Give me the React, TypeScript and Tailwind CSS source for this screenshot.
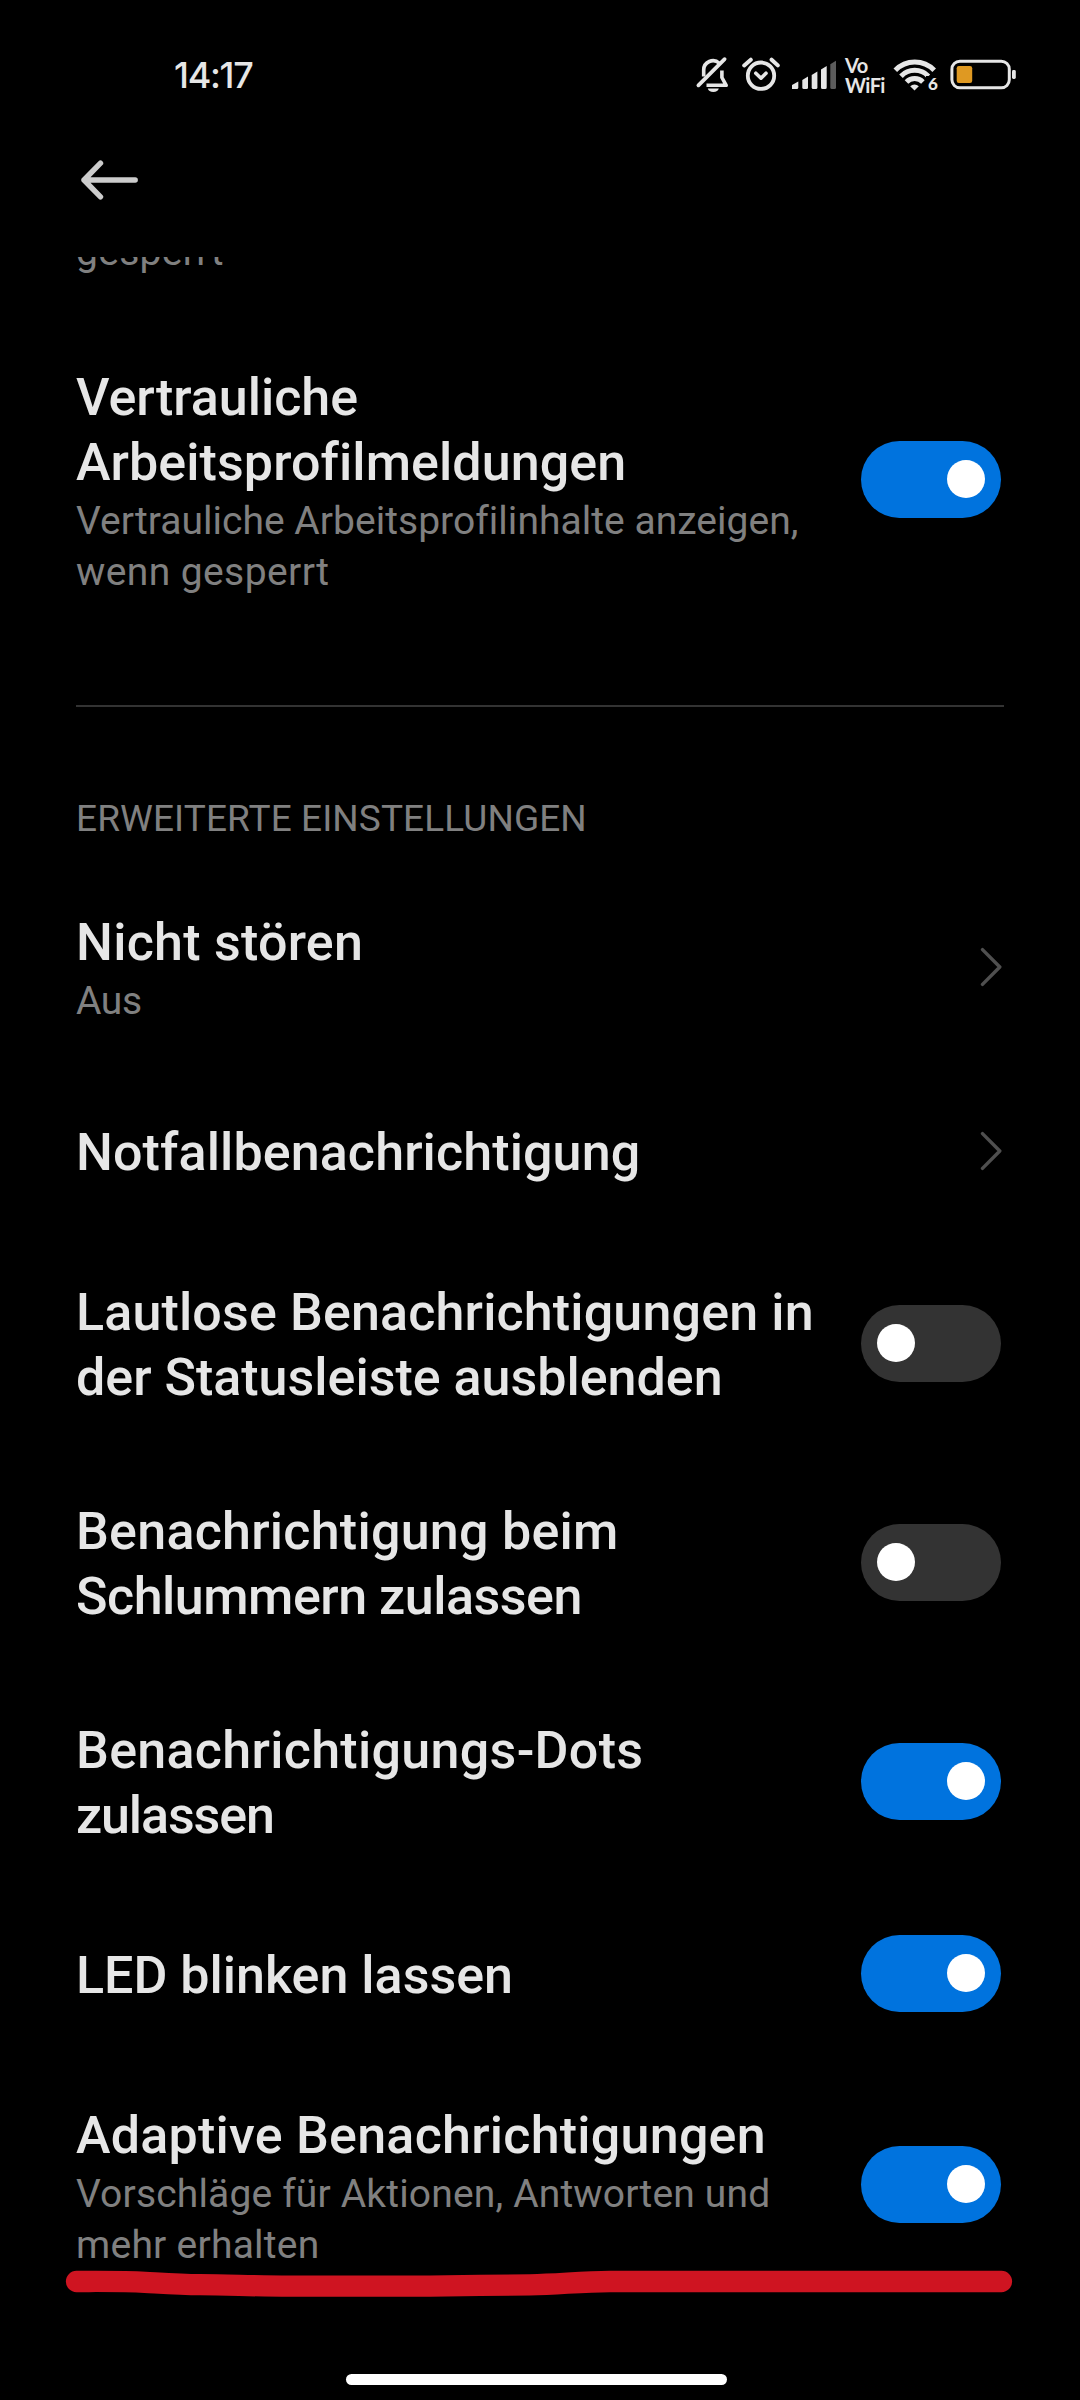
import { useState } from 'react';

type Line = { text: string; tracking: string };

type Setting = {
  title: Line[];
  summary?: Line[];
  kind: 'switch' | 'link';
  on?: boolean;
};

const PROFILE_SETTINGS: Setting[] = [
  {
    title: [
      { text: 'Vertrauliche', tracking: 'tracking-normal' },
      { text: 'Arbeitsprofilmeldungen', tracking: 'tracking-[0.08px]' },
    ],
    summary: [
      { text: 'Vertrauliche Arbeitsprofilinhalte anzeigen,', tracking: 'tracking-[0.03px]' },
      { text: 'wenn gesperrt', tracking: 'tracking-[0.4px]' },
    ],
    kind: 'switch',
    on: true,
  },
];

const ADVANCED_SETTINGS: Setting[] = [
  {
    title: [{ text: 'Nicht stören', tracking: 'tracking-[0.25px]' }],
    summary: [{ text: 'Aus', tracking: 'tracking-[-0.4px]' }],
    kind: 'link',
  },
  {
    title: [{ text: 'Notfallbenachrichtigung', tracking: 'tracking-[0.11px]' }],
    kind: 'link',
  },
  {
    title: [
      { text: 'Lautlose Benachrichtigungen in', tracking: 'tracking-[0.15px]' },
      { text: 'der Statusleiste ausblenden', tracking: 'tracking-normal' },
    ],
    kind: 'switch',
    on: false,
  },
  {
    title: [
      { text: 'Benachrichtigung beim', tracking: 'tracking-[0.25px]' },
      { text: 'Schlummern zulassen', tracking: 'tracking-[-0.48px]' },
    ],
    kind: 'switch',
    on: false,
  },
  {
    title: [
      { text: 'Benachrichtigungs-Dots', tracking: 'tracking-[0.3px]' },
      { text: 'zulassen', tracking: 'tracking-[-1.1px]' },
    ],
    kind: 'switch',
    on: true,
  },
  {
    title: [{ text: 'LED blinken lassen', tracking: 'tracking-normal' }],
    kind: 'switch',
    on: true,
  },
  {
    title: [{ text: 'Adaptive Benachrichtigungen', tracking: 'tracking-[0.24px]' }],
    summary: [
      { text: 'Vorschläge für Aktionen, Antworten und', tracking: 'tracking-[0.16px]' },
      { text: 'mehr erhalten', tracking: 'tracking-[0.25px]' },
    ],
    kind: 'switch',
    on: true,
  },
];

function BellOffIcon() {
  return (
    <svg width="34" height="38" viewBox="0 0 34 38" fill="none" stroke="#e6e6e6" strokeWidth="3.6">
      <path d="M8.7 21.5V15a9.3 9.3 0 0 1 15.6-6.8" />
      <path d="M26.9 15.5V22.5l4.3 7.8H11.5" strokeLinejoin="round" />
      <path d="M3.4 30.3L29.6 4.2" strokeWidth="3.8" strokeLinecap="round" />
      <path d="M12.8 33.6h11a5.6 4.2 0 0 1-11 0Z" fill="#e6e6e6" stroke="none" />
    </svg>
  );
}

function AlarmIcon() {
  return (
    <svg width="40" height="38" viewBox="0 0 40 38" fill="none" stroke="#e6e6e6" strokeWidth="3.6">
      <circle cx="20" cy="20.7" r="13.2" strokeWidth="3.8" />
      <path d="M14.8 18.2l5.2 5 5-5" strokeLinecap="round" strokeLinejoin="round" />
      <path d="M3.2 10.4L9.8 4.7M30.6 4.7l6.2 5.7" strokeLinecap="round" strokeWidth="4" />
    </svg>
  );
}

function SignalIcon() {
  return (
    <svg width="44" height="38" viewBox="0 0 44 38" fill="#e6e6e6">
      <path d="M0 30L6.3 26.5v6a1.5 1.5 0 0 1-1.5 1.5H0Z" />
      <path d="M10.3 25L16 21.5v11a1.5 1.5 0 0 1-1.5 1.5h-2.7a1.5 1.5 0 0 1-1.5-1.5Z" />
      <path d="M19.7 20l5.7-3.5v16a1.5 1.5 0 0 1-1.5 1.5h-2.7a1.5 1.5 0 0 1-1.5-1.5Z" />
      <path d="M29 14.5l5.7-3.5v21.5a1.5 1.5 0 0 1-1.5 1.5h-2.7a1.5 1.5 0 0 1-1.5-1.5Z" />
      <path d="M38.3 9.2l5.7-3.5v26.8a1.5 1.5 0 0 1-1.5 1.5h-2.7a1.5 1.5 0 0 1-1.5-1.5Z" fill="#5c5c5c" />
    </svg>
  );
}

function WifiIcon() {
  return (
    <svg width="44" height="38" viewBox="0 0 44 38" fill="none" stroke="#e6e6e6" strokeWidth="5">
      <path d="M2.3 15.2a27 27 0 0 1 38.9 0" />
      <path d="M8 21.2a19 19 0 0 1 27.4 0" />
      <path d="M13.5 27a11.5 11.5 0 0 1 16.4 0" />
      <path d="M17.2 31.3a6 6 0 0 1 8.6 0L21.5 35.6Z" fill="#e6e6e6" stroke="none" />
    </svg>
  );
}

function BatteryIcon() {
  return (
    <svg width="66" height="38" viewBox="0 0 66 38">
      <rect x="1.9" y="6.2" width="57.4" height="26.6" rx="8" fill="none" stroke="#e6e6e6" strokeWidth="3" />
      <rect x="6.7" y="11" width="15.5" height="17" rx="2.2" fill="#df9922" />
      <rect x="62" y="15" width="3.8" height="9" rx="1.4" fill="#e6e6e6" />
    </svg>
  );
}

function StatusBar() {
  return (
    <div className="flex h-[148px] items-center justify-between pr-[64px] pl-[174px] text-[#e6e6e6]">
      <span className="mt-[2px] font-['Inter',sans-serif] text-[36px] leading-none font-medium tracking-[-1.3px]">14:17</span>
      <div className="flex items-center">
        <BellOffIcon />
        <div className="ml-[12px]"><AlarmIcon /></div>
        <div className="ml-[11px]"><SignalIcon /></div>
        <div className="ml-[9px] flex w-[41px] flex-col pt-[1px] font-['Lato',sans-serif] text-[20px] leading-[20px] font-bold tracking-[-0.6px]">
          <span>Vo</span>
          <span>WiFi</span>
        </div>
        <div className="relative ml-[7px]">
          <WifiIcon />
          <span className="absolute top-[21px] left-[33px] bg-black pl-[2px] font-['Lato',sans-serif] text-[17px] leading-[15px] font-black">6</span>
        </div>
        <div className="ml-[13px]"><BatteryIcon /></div>
      </div>
    </div>
  );
}

function Chevron() {
  return (
    <svg className="mr-[2px] shrink-0" width="22" height="40" viewBox="0 0 22 40" fill="none" stroke="#4f4f4f" strokeWidth="3.4" strokeLinecap="round" strokeLinejoin="round">
      <path d="M2.5 2.6L19.8 20 2.5 37.4" />
    </svg>
  );
}

function Switch({ defaultOn }: { defaultOn?: boolean }) {
  const [on, setOn] = useState(!!defaultOn);
  return (
    <button
      type="button"
      role="switch"
      aria-checked={on}
      onClick={() => setOn(!on)}
      className={`mr-[3px] flex h-[77px] w-[140px] shrink-0 items-center rounded-full px-[16px] pb-[1px] ${
        on ? 'justify-end bg-[#0073de]' : 'justify-start bg-[#333333]'
      }`}
    >
      <span className="h-[38px] w-[38px] rounded-full bg-white" />
    </button>
  );
}

function SettingRow({ setting }: { setting: Setting }) {
  return (
    <div className="flex min-h-[164.5px] items-center justify-between py-[44.5px]">
      <div className="mt-[1.5px] -mb-[1.5px] whitespace-nowrap">
        {setting.title.map((line) => (
          <div key={line.text} className={`text-[52px] leading-[65px] font-medium text-[#e6e6e6] ${line.tracking}`}>
            {line.text}
          </div>
        ))}
        {setting.summary && (
          <div className="mt-[1px] -mb-[1px] text-[39px] leading-[51px] text-[#808080]">
            {setting.summary.map((line) => (
              <div key={line.text} className={line.tracking}>{line.text}</div>
            ))}
          </div>
        )}
      </div>
      {setting.kind === 'switch' ? <Switch defaultOn={setting.on} /> : <Chevron />}
    </div>
  );
}

export default function App() {
  return (
    <div className="relative flex h-[2400px] w-[1080px] flex-col overflow-hidden bg-black font-['Roboto',sans-serif]">
      <StatusBar />

      <header className="flex h-[109px] items-start pt-[12px] pl-[79px]">
        <svg width="62" height="40" viewBox="0 0 62 40" fill="none" stroke="#cccccc" strokeWidth="5.4" strokeLinecap="round" strokeLinejoin="round">
          <path d="M56.2 20H5M21.5 3.2L5 20l16.5 16.8" />
        </svg>
      </header>

      <main className="flex flex-1 flex-col overflow-hidden px-[76px]">
        {/* tail of the row that is scrolled under the header */}
        <div className="flex h-[62px] flex-col">
          <div className="-mt-[30px] text-[39px] leading-[51px] tracking-[0.3px] text-[#808080]">gesperrt</div>
        </div>

        {PROFILE_SETTINGS.map((setting) => (
          <SettingRow key={setting.title[0].text} setting={setting} />
        ))}

        <div className="mt-[65px] h-[2px] shrink-0 bg-[#333333]" />

        <h2 className="mt-[86.5px] mb-[20.5px] h-[50px] text-[37px] leading-[50px] tracking-[0.1px] text-[#808080]">
          ERWEITERTE EINSTELLUNGEN
        </h2>

        {ADVANCED_SETTINGS.map((setting) => (
          <SettingRow key={setting.title[0].text} setting={setting} />
        ))}
      </main>

      {/* hand-drawn underline over the last row */}
      <svg className="absolute top-[2260px] left-0" width="1080" height="50" viewBox="0 0 1080 50" fill="none" stroke="#cf1421" strokeWidth="21.3" strokeLinecap="round" strokeLinejoin="round">
        <path d="M76.5 21.5C100 21.5 125 21.2 145 22.3C165 23.5 180 24.7 200 24.7C230 24.7 250 26.1 290 26.2H430C460 25.6 500 25.3 530 24.8C560 24.3 580 21.6 610 21.5H1001.5" />
      </svg>

      <div className="absolute bottom-[15px] left-[346px] h-[11px] w-[381px] rounded-full bg-white" />
    </div>
  );
}
